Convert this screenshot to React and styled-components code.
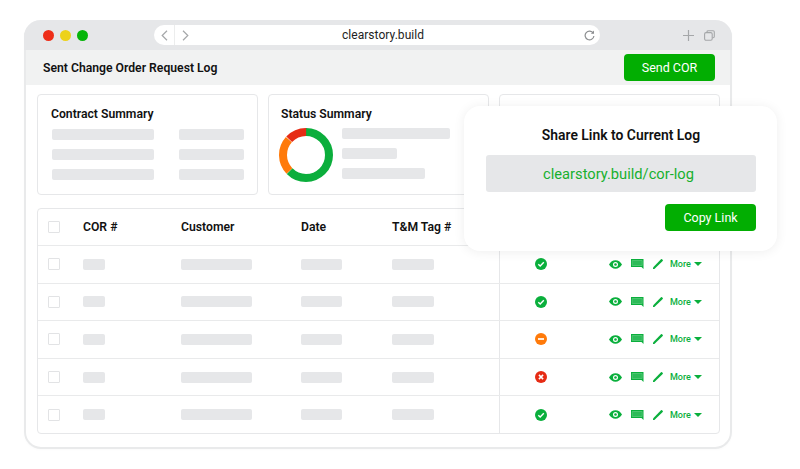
import React from "react";
import styled, { createGlobalStyle } from "styled-components";

const Global = createGlobalStyle`
  html, body { margin: 0; padding: 0; background: #fff; }
  body { font-family: Roboto, "Liberation Sans", sans-serif; color: #111; width: 800px; height: 469px; overflow: hidden; }
  * { box-sizing: border-box; }
`;

const Page = styled.div`
  padding: 20px 0 0 24px;
`;
const Window = styled.div`
  position: relative;
  width: 708px;
  height: 429px;
  border: 2px solid #e9eaeb;
  border-top: 0;
  border-radius: 17px;
  background: #fff;
  box-shadow: 0 1px 3px rgba(0, 0, 0, 0.02);
  display: flex;
  flex-direction: column;
`;
const TitleBar = styled.div`
  height: 30px;
  margin: 0 -2px;
  background: #e6e7e9;
  border-radius: 17px 17px 0 0;
  display: flex;
  align-items: center;
  padding: 0 17px 0 19px;
`;
const Lights = styled.div`
  display: flex;
  gap: 6px;
  margin-right: 66px;
`;
const Light = styled.span`
  width: 11px;
  height: 11px;
  border-radius: 50%;
  background: ${(p) => p.$color};
`;
const AddressBar = styled.div`
  width: 446px;
  height: 20px;
  background: #fff;
  border-radius: 10px;
  display: flex;
  align-items: center;
  color: #999;
`;
const NavBtn = styled.span`
  width: 21px;
  height: 20px;
  display: flex;
  align-items: center;
  justify-content: center;
  border-right: ${(p) => (p.$divided ? "1px solid #eceded" : "0")};
`;
const Url = styled.span`
  flex: 1;
  text-align: center;
  font-size: 12px;
  letter-spacing: 0.05px;
  color: #222;
  padding-right: 14px;
`;
const Reload = styled.span`
  display: flex;
  margin-right: 5px;
`;
const WinTools = styled.div`
  margin-left: auto;
  display: flex;
  align-items: center;
  gap: 10px;
`;
const Header = styled.div`
  height: 35px;
  margin: 0 -2px;
  padding: 0 15px 0 17px;
  border-left: 2px solid #e9eaeb;
  border-right: 2px solid #e9eaeb;
  background: #f1f2f2;
  display: flex;
  align-items: center;
  justify-content: space-between;
`;
const PageTitle = styled.h1`
  margin: 0;
  font: 600 12.2px Roboto, sans-serif;
`;
const GreenButton = styled.button`
  width: 91px;
  height: 27px;
  border: 0;
  border-radius: 4px;
  background: #02ae02;
  color: #fff;
  font: 400 12.5px Roboto, sans-serif;
  padding: 0;
`;
const Body = styled.div`
  padding: 9px 10px 13px 11px;
  display: flex;
  flex-direction: column;
  gap: 13px;
`;
const Cards = styled.div`
  display: flex;
  gap: 10px;
`;
const Card = styled.section`
  width: 221px;
  height: 101px;
  border: 1px solid #e6e7e9;
  border-radius: 4px;
  padding: 12px 13px 0 ${(p) => p.$pl || 13}px;
`;
const CardTitle = styled.h2`
  margin: 0 0 8px;
  font: 600 12.2px/14px Roboto, sans-serif;
`;
const CardRow = styled.div`
  display: flex;
  justify-content: space-between;
  padding-left: 1px;
`;
const BarStack = styled.div`
  display: flex;
  flex-direction: column;
  gap: 9px;
`;
const Bar = styled.div`
  width: ${(p) => p.$w}px;
  height: 11px;
  border-radius: 2px;
  background: #e6e7e9;
`;
const StatusRow = styled.div`
  display: flex;
  gap: 9px;
  margin: -1px 0 0 -2px;
`;
const Table = styled.div`
  height: 226px;
  border: 1px solid #e6e7e9;
  border-radius: 4px;
  display: grid;
  grid-template-rows: 36px repeat(5, 1fr);
`;
const Row = styled.div`
  display: grid;
  grid-template-columns: 45px 98px 120px 91px 108px 1fr;
  align-items: center;
  border-top: ${(p) => (p.$first ? "0" : "1.5px solid #e9eaeb")};
`;
const Check = styled.span`
  width: 12px;
  height: 12px;
  margin-left: 10px;
  border: 1px solid #e2e3e5;
  border-radius: 1px;
  display: block;
`;
const HeadCell = styled.span`
  font: 600 12.2px Roboto, sans-serif;
`;
const SplitCell = styled.div`
  height: 100%;
  display: flex;
  align-items: center;
  border-right: 1.5px solid #e6e7e9;
`;
const ActionCell = styled.div`
  display: flex;
  align-items: center;
  padding-left: 35px;
`;
const StatusIcon = styled.svg`
  width: 12px;
  height: 12px;
  margin-right: 62px;
  flex: none;
`;
const Actions = styled.div`
  display: flex;
  align-items: center;
  color: #0aaf3c;
`;
const More = styled.span`
  display: flex;
  align-items: center;
  gap: 3px;
  margin-left: 7px;
  font: 500 9px Roboto, sans-serif;
  color: #0aaf3c;
`;
const Popover = styled.div`
  position: absolute;
  left: 438px;
  top: 86px;
  width: 313px;
  height: 145px;
  border-radius: 16px;
  background: #fff;
  box-shadow: 0 1px 12px rgba(0, 0, 0, 0.07);
  padding: 21px 21px 0 22px;
  display: flex;
  flex-direction: column;
  align-items: center;
`;
const PopTitle = styled.h3`
  margin: 0 0 12px;
  font: 600 13.9px/16px Roboto, sans-serif;
`;
const LinkBox = styled.div`
  width: 100%;
  height: 37px;
  background: #e6e7e9;
  border-radius: 3px;
  color: #17b02e;
  font-size: 14.7px;
  display: flex;
  align-items: center;
  justify-content: center;
  padding-right: 5px;
  margin-bottom: 12px;
`;
const PopFooter = styled.div`
  width: 100%;
  display: flex;
  justify-content: flex-end;
`;

const G = "#0aaf3c";
const Eye = () => (
  <svg width="13" height="9" viewBox="0 0 13 9" style={{ marginRight: 9 }}>
    <path fill={G} fillRule="evenodd" d="M0 4.5C1.5 1.8 3.8.3 6.5.3S11.5 1.8 13 4.5C11.5 7.2 9.2 8.7 6.5 8.7S1.5 7.2 0 4.5ZM6.5 2a2.5 2.5 0 1 0 0 5 2.5 2.5 0 0 0 0-5Z" />
    <circle cx="6.5" cy="4.5" r="1.3" fill={G} />
  </svg>
);
const Comment = () => (
  <svg width="13" height="10" viewBox="0 0 13 10" style={{ marginRight: 9 }}>
    <path fill={G} d="M0 0h12.5v10L10.5 8H0Z" />
    <path stroke="#5fcb80" strokeWidth=".7" d="M1.2 1.5h10v5h-10Z" fill="#2dbb58" />
  </svg>
);
const Pen = () => (
  <svg width="10" height="10" viewBox="0 0 10 10">
    <path fill={G} d="M0 10V8.6L8 .3a.8.8 0 0 1 1.1 0l.6.6a.8.8 0 0 1 0 1.1L1.4 10Z" />
  </svg>
);
const Caret = () => (
  <svg width="8" height="4" viewBox="0 0 8 4">
    <path fill={G} d="M0 0h8L4 4Z" />
  </svg>
);

const Status = ({ kind }) => {
  const fill = { ok: "#0aaf3c", warn: "#ff7a0a", err: "#e62b14" }[kind];
  return (
    <StatusIcon viewBox="0 0 12 12">
      <circle cx="6" cy="6" r="6" fill={fill} />
      {kind === "ok" && <path d="M3.3 6.2 5.2 8l3.6-3.7" fill="none" stroke="#fff" strokeWidth="1.4" />}
      {kind === "warn" && <path d="M3 6h6" stroke="#fff" strokeWidth="1.7" />}
      {kind === "err" && <path d="m3.9 3.9 4.2 4.2m0-4.2L3.9 8.1" stroke="#fff" strokeWidth="1.5" />}
    </StatusIcon>
  );
};

const Donut = () => {
  const r = 23;
  const c = 2 * Math.PI * r;
  const segs = [
    { color: "#0bae3c", from: 0, to: 224 },
    { color: "#ff7a0a", from: 226, to: 311 },
    { color: "#e62b14", from: 313, to: 360 },
  ];
  return (
    <svg width="54" height="54" viewBox="0 0 54 54">
      {segs.map((s) => (
        <circle
          key={s.color}
          cx="27"
          cy="27"
          r={r}
          fill="none"
          stroke={s.color}
          strokeWidth="8"
          strokeDasharray={`${((s.to - s.from) / 360) * c} ${c}`}
          transform={`rotate(${s.from - 90} 27 27)`}
        />
      ))}
    </svg>
  );
};

const rows = ["ok", "ok", "warn", "err", "ok"];

export default function App() {
  return (
    <>
      <Global />
      <Page>
        <Window>
          <TitleBar>
            <Lights>
              <Light $color="#ee2e19" />
              <Light $color="#edd21a" />
              <Light $color="#06b50a" />
            </Lights>
            <AddressBar>
              <NavBtn $divided>
                <svg width="7" height="11" viewBox="0 0 7 11"><path d="M6 .8 1.2 5.5 6 10.2" fill="none" stroke="#a5a7a9" strokeWidth="1.2" /></svg>
              </NavBtn>
              <NavBtn>
                <svg width="7" height="11" viewBox="0 0 7 11"><path d="m1 .8 4.8 4.7L1 10.2" fill="none" stroke="#a5a7a9" strokeWidth="1.2" /></svg>
              </NavBtn>
              <Url>clearstory.build</Url>
              <Reload>
                <svg width="11" height="11" viewBox="0 0 11 11"><path d="M9.3 3.2A4.4 4.4 0 1 0 9.9 6" fill="none" stroke="#8c8e90" strokeWidth="1.2" /><path d="M10 .6v3.2H6.8Z" fill="#8c8e90" /></svg>
              </Reload>
            </AddressBar>
            <WinTools>
              <svg width="11" height="11" viewBox="0 0 11 11"><path d="M5.5 0v11M0 5.5h11" stroke="#a5a7a9" strokeWidth="1.2" /></svg>
              <svg width="11" height="11" viewBox="0 0 11 11"><rect x=".6" y="2.6" width="7.6" height="7.6" rx="1.4" fill="none" stroke="#a5a7a9" strokeWidth="1.1" /><path d="M3 2.4V1.9C3 1.1 3.5.7 4.2.7h4.9c.7 0 1.2.5 1.2 1.2v4.7c0 .7-.4 1.2-1.2 1.2h-.8" fill="none" stroke="#a5a7a9" strokeWidth="1.1" /></svg>
            </WinTools>
          </TitleBar>
          <Header>
            <PageTitle>Sent Change Order Request Log</PageTitle>
            <GreenButton>Send COR</GreenButton>
          </Header>
          <Body>
            <Cards>
              <Card>
                <CardTitle>Contract Summary</CardTitle>
                <CardRow>
                  <BarStack><Bar $w={102} /><Bar $w={102} /><Bar $w={102} /></BarStack>
                  <BarStack><Bar $w={65} /><Bar $w={65} /><Bar $w={65} /></BarStack>
                </CardRow>
              </Card>
              <Card $pl={12}>
                <CardTitle>Status Summary</CardTitle>
                <StatusRow>
                  <Donut />
                  <BarStack><Bar $w={108} /><Bar $w={55} /><Bar $w={83} /></BarStack>
                </StatusRow>
              </Card>
              <Card />
            </Cards>
            <Table>
              <Row $first>
                <Check />
                <HeadCell>COR #</HeadCell>
                <HeadCell>Customer</HeadCell>
                <HeadCell>Date</HeadCell>
                <SplitCell><HeadCell>T&amp;M Tag #</HeadCell></SplitCell>
                <span />
              </Row>
              {rows.map((kind, i) => (
                <Row key={i}>
                  <Check />
                  <Bar $w={22} />
                  <Bar $w={71} />
                  <Bar $w={41} />
                  <SplitCell><Bar $w={42} /></SplitCell>
                  <ActionCell>
                    <Status kind={kind} />
                    <Actions>
                      <Eye />
                      <Comment />
                      <Pen />
                      <More>More <Caret /></More>
                    </Actions>
                  </ActionCell>
                </Row>
              ))}
            </Table>
          </Body>
          <Popover>
            <PopTitle>Share Link to Current Log</PopTitle>
            <LinkBox>clearstory.build/cor-log</LinkBox>
            <PopFooter><GreenButton>Copy Link</GreenButton></PopFooter>
          </Popover>
        </Window>
      </Page>
    </>
  );
}
